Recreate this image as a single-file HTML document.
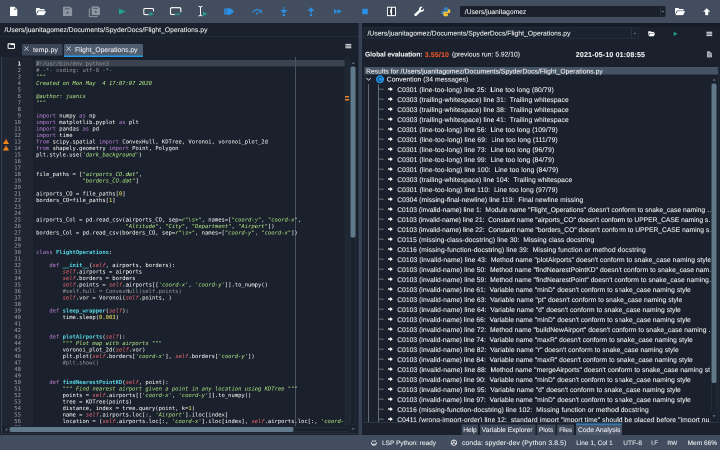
<!DOCTYPE html>
<html lang="en"><head><meta charset="utf-8"><title>Spyder - Flight_Operations.py</title>
<style>

html,body{margin:0;padding:0;}
body{text-rendering:geometricPrecision;width:720px;height:450px;overflow:hidden;background:#1a212c;position:relative;font-family:"Liberation Sans", "DejaVu Sans", sans-serif;color:#e8eaec;}
div,span,svg,pre{position:absolute;box-sizing:border-box;}

.t{-webkit-text-stroke:0.12px;white-space:pre;line-height:10px;height:10px;}
pre{margin:0;font-family:"DejaVu Sans Mono", "Liberation Mono", monospace;font-size:5.5px;line-height:6.5px;color:#fff;white-space:pre;}
pre span,pre i,pre b{position:static;}
.s{color:#b0e686;} .c{color:#999;} .n{color:#faed5c;} .k{color:#bd7fd6;} .i{color:#ee6772;} .d{color:#57d6e4;}
#half{left:0;top:0;width:1440px;height:900px;transform:scale(.5);transform-origin:0 0;}
#dbl{left:0;top:0;width:720px;height:450px;zoom:2;}
#toolbar,#left,#editor,#right,#status,#tree{will-change:transform;}
#ln{color:#9da2a9;text-align:right;}
.row{left:0;width:100%;height:10px;}
.ic{overflow:visible;}

</style></head><body><div id="half"><div id="dbl">
<div id="toolbar" style="left:0;top:0;width:720px;height:23px;background:#424e60">
<div style="left:460px;top:5.8px;width:205.5px;height:11.4px;background:#1a212c;border-radius:1.5px"></div>
<div style="left:660px;top:6.5px;width:0.5px;height:10px;background:#37414f"></div>
<svg class="ic" style="left:0;top:0" width="720" height="23" viewBox="0 0 720 23"><path d="M10.6,6.8 H14.6 L17.3,9.5 V15.4 q0,.6 -.6,.6 H10.6 q-.6,0 -.6,-.6 V7.4 q0,-.6 .6,-.6z" fill="#ffffff"/><path d="M14.3,7.6 V9.9 H16.6z" fill="#5a6677"/><path d="M36.00,14.51 L36.00,8.59 Q36.00,8.00 36.60,8.00 L39.30,8.00 L40.30,8.99 L44.00,8.99 Q44.60,8.99 44.60,9.58 L44.60,10.47 L38.60,10.47 Q37.90,10.47 37.60,11.06 Z" fill="#ffffff"/><path d="M36.50,15.10 L38.30,11.55 Q38.50,11.16 39.00,11.16 L45.70,11.16 Q46.20,11.16 45.90,11.65 L44.30,14.71 Q44.10,15.10 43.60,15.10 Z" fill="#ffffff"/><path d="M63.8,6.8 H70.098 L72.1,8.802 V15.2 q0,.8 -.8,.8 H63.8 q-.8,0 -.8,-.8 V7.6 q0,-.8 .8,-.8z" fill="#8d95a1"/><rect x="64.82" y="8.36" width="4.73" height="0.92" fill="#424e60"/><circle cx="67.55" cy="12.60" r="1.00" fill="#424e60"/><path d="M90.6,9 H89.9 q-.6,0 -.6,.6 V16 q0,.6 .6,.6 H96.6 q.6,0 .6,-.6 V15.6" fill="none" stroke="#8d95a1" stroke-width="1"/><path d="M92.39999999999999,6.4 H98.152 L100.0,8.248000000000001 V14.2 q0,.8 -.8,.8 H92.39999999999999 q-.8,0 -.8,-.8 V7.2 q0,-.8 .8,-.8z" fill="#8d95a1"/><rect x="93.28" y="7.86" width="4.37" height="0.86" fill="#424e60"/><circle cx="95.80" cy="11.82" r="0.92" fill="#424e60"/><path d="M119,8.7 L125.7,11.5 L119,14.4z" fill="#21a28f"/><path d="M148.6,14.6 H145 q-1.2,0 -1.2,-1.2 V9.7 q0,-1.2 1.2,-1.2 H152.3 q1.2,0 1.2,1.2 V11.4" fill="none" stroke="#ffffff" stroke-width="1"/><path d="M149.6,12 L153.9,14 L149.6,16z" fill="#21a28f"/> <path d="M174.6,14.5 H171.8 q-1.3,0 -1.3,-1.3 V9 q0,-1.3 1.3,-1.3 H179.5 q1.3,0 1.3,1.3 V12.2" fill="none" stroke="#ffffff" stroke-width="1.1"/><path d="M175.4,13 L177.9,14.2 L175.4,15.4z M177.9,13 L180.4,14.2 L177.9,15.4z" fill="#21a28f"/><path d="M198.6,6.4 q1.4,0 1.9,.8 q.5,-.8 1.9,-.8 M198.6,15.9 q1.4,0 1.9,-.8 q.5,.8 1.9,.8 M200.5,7 V15.3" fill="none" stroke="#ffffff" stroke-width="0.95"/><path d="M203,11.8 L207.4,13.9 L203,16z" fill="#21a28f"/><path d="M224.3,8.3 H225.8 V14.8 H224.3z M226.4,8.2 H229.4 Q230.3,8.2 231,8.9 L233.6,10.9 Q234.3,11.5 233.6,12.1 L231,14.1 Q230.3,14.8 229.4,14.8 H226.4z" fill="#2b90e3"/><path d="M252.8,12.4 Q256.5,7.4 260.4,11" fill="none" stroke="#2b90e3" stroke-width="1.2"/><path d="M258.6,12.6 L261.8,9.2 L261.9,12.7z" fill="#2b90e3"/><circle cx="256.8" cy="13.4" r="1.05" fill="#2b90e3"/><path d="M283.35,6.9 H284.35 V10 H287.6 L283.85,13.5 L280.1,10 H283.35z" fill="#2b90e3"/><rect x="282.6" y="14.1" width="2.5" height="1.9" fill="#2b90e3"/><path d="M311,7.2 L314.4,10.9 H311.75 V13.2 H310.25 V10.9 H307.6z" fill="#2b90e3"/><rect x="309.9" y="14.1" width="2.2" height="1.9" fill="#2b90e3"/><path d="M334,9 L337.9,11.4 L334,13.8z M337.8,9 L341.7,11.4 L337.8,13.8z" fill="#2b90e3"/><rect x="362.2" y="8.8" width="5.6" height="5.5" rx="0.7" fill="#2b90e3"/><rect x="387" y="6.8" width="9" height="9.3" rx="0.5" fill="#ffffff"/><path d="M387.9,7.8 H390.9 V8.8 Q389.3,11.4 390.9,14.1 V15.1 H387.9z" fill="#2d3644"/><rect x="392.1" y="7.8" width="2.9" height="7.3" fill="#2d3644"/><path d="M414.9,15.8 Q413.8,15.3 414.3,14.4 L419,9.9 Q418.6,7.9 420.2,7 Q421.4,6.4 422.6,6.9 L420.8,8.7 L421.1,9.9 L422.3,10.2 L424,8.4 Q424.5,9.8 423.6,10.9 Q422.5,12 420.9,11.6 L416.2,16 Q415.6,16.4 414.9,15.8z" fill="#ffffff"/><path d="M445.6,7.3 q-2,0 -2,1.5 v1.3 h2.3 v.5 h-3.3 q-1.3,0 -1.3,1.9 q0,1.9 1.3,1.9 h.9 v-1.3 q0,-1.2 1.4,-1.2 h2.2 q1.1,0 1.1,-1.1 v-2 q0,-1.5 -2.6,-1.5z" fill="#3b7fb8"/><path d="M446,16.4 q2,0 2,-1.5 v-1.3 h-2.3 v-.5 h3.3 q1.3,0 1.3,-1.9 q0,-1.9 -1.3,-1.9 h-.9 v1.3 q0,1.2 -1.4,1.2 h-2.2 q-1.1,0 -1.1,1.1 v2 q0,1.5 2.6,1.5z" fill="#f6c73e"/><path d="M661.8,11 L662.8,12 L663.8,11" fill="none" stroke="#9aa1ab" stroke-width="0.55"/><path d="M675.00,14.51 L675.00,8.59 Q675.00,8.00 675.60,8.00 L678.30,8.00 L679.30,8.99 L683.00,8.99 Q683.60,8.99 683.60,9.58 L683.60,10.47 L677.60,10.47 Q676.90,10.47 676.60,11.06 Z" fill="#ffffff"/><path d="M675.50,15.10 L677.30,11.55 Q677.50,11.16 678.00,11.16 L684.70,11.16 Q685.20,11.16 684.90,11.65 L683.30,14.71 Q683.10,15.10 682.60,15.10 Z" fill="#ffffff"/><path d="M706.7,8.2 L710.3,11.8 H708.2 V15.1 H705.2 V11.8 H703.1z" fill="#ffffff"/></svg>
<span class="t " style="left:464.8px;top:6.85px;font-size:6.7px;color:#e8eaec;letter-spacing:0.025px;">/Users/juanitagomez</span>
</div>
<div id="left" style="left:0;top:23px;width:358.5px;height:412px;background:#1a212c">
<span class="t " style="left:4.5px;top:2.05px;font-size:6.7px;color:#e8eaec;letter-spacing:0.070px;">/Users/juanitagomez/Documents/SpyderDocs/Flight_Operations.py</span>
<div style="left:0;top:13.4px;width:358.5px;height:0.8px;background:#2a3442"></div>
<div style="left:22px;top:21px;width:40.7px;height:11.4px;background:#3b4657;border-radius:1.5px 1.5px 0 0"></div>
<div style="left:64px;top:21px;width:79px;height:13px;background:#4f5d70;border-radius:1.5px 1.5px 0 0;border-bottom:1.7px solid #259ae9"></div>
<span class="t " style="left:33px;top:21.75px;font-size:6.717px;color:#e8eaec;letter-spacing:0.160px;">temp.py</span>
<span class="t " style="left:75px;top:21.75px;font-size:6.7px;color:#e8eaec;letter-spacing:0.036px;">Flight_Operations.py</span>
<svg class="ic" style="left:0;top:-23px" width="360" height="60" viewBox="0 0 360 60"><rect x="7.6" y="43.2" width="7.4" height="5.7" rx="0.9" fill="#ffffff"/><path d="M8.6,44.4 H10.4 L11,45.1 H14 V47.9 H8.6z" fill="#1a212c"/><path d="M24.45,46.550000000000004 L28.55,50.65 M28.55,46.550000000000004 L24.45,50.65" stroke="#d6d9de" stroke-width="0.65" fill="none"/><path d="M66.55,46.550000000000004 L70.64999999999999,50.65 M70.64999999999999,46.550000000000004 L66.55,50.65" stroke="#d6d9de" stroke-width="0.65" fill="none"/><rect x="345.4" y="43.90" width="5.9" height="1.23" fill="#c4c8ce"/><rect x="345.4" y="45.48" width="5.9" height="1.23" fill="#c4c8ce"/><rect x="345.4" y="47.07" width="5.9" height="1.23" fill="#c4c8ce"/></svg>
</div>
<div id="editor" style="left:1.2px;top:56.6px;width:356.3px;height:377.4px;background:#1a212c;border:0.5px solid #364152;border-left-width:1px;border-right-width:0;overflow:hidden">
<div style="left:0;top:0;width:31.2px;height:376px;background:#1f2632"></div>
<div style="left:33.5px;top:3.10px;width:309.4px;height:6.3px;background:#3a434f"></div>
<div style="left:293.2px;top:0;width:0.6px;height:370px;background:#4a5361"></div>
<pre id="ln" style="left:0;top:3.40px;width:18.9px"><b style="color:#fff">1</b>
2
3
4
5
6
7
8
9
10
11
12
13
14
15
16
17
18
19
20
21
22
23
24
25
26
27
28
29
30
31
32
33
34
35
36
37
38
39
40
41
42
43
44
45
46
47
48
49
50
51
52
53
54
55
56
57</pre>
<pre id="code" style="left:34.10px;top:3.40px;width:308.4px;height:364.7px;overflow:hidden"><span class="c">#!/usr/bin/env python3</span>
<span class="c"># -*- coding: utf-8 -*-</span>
<i class="s">"""</i>
<i class="s">Created on Mon May  4 17:07:07 2020</i>
<i class="s"></i>
<i class="s">@author: juanis</i>
<i class="s">"""</i>

<span class="k">import</span> numpy <span class="k">as</span> np
<span class="k">import</span> matplotlib.pyplot <span class="k">as</span> plt
<span class="k">import</span> pandas <span class="k">as</span> pd
<span class="k">import</span> time
<span class="k">from</span> scipy.spatial <span class="k">import</span> ConvexHull, KDTree, Voronoi, voronoi_plot_2d
<span class="k">from</span> shapely.geometry <span class="k">import</span> Point, Polygon
plt.style.use(<i class="s">'dark_background'</i>)


file_paths = [<i class="s">"airports_CO.dat"</i>,
              <i class="s">"borders_CO.dat"</i>]

airports_CO = file_paths[<span class="n">0</span>]
borders_CO=file_paths[<span class="n">1</span>]


airports_Col = pd.read_csv(airports_CO, sep=<i class="s">r"\s+"</i>, names=[<i class="s">"coord-y"</i>, <i class="s">"coord-x"</i>,
                           <i class="s">"Altitude"</i>, <i class="s">"City"</i>, <i class="s">"Department"</i>, <i class="s">"Airport"</i>])
borders_Col = pd.read_csv(borders_CO, sep=<i class="s">r"\s+"</i>, names=[<i class="s">"coord-y"</i>, <i class="s">"coord-x"</i>])


<span class="k">class</span> <b class="d">FlightOperations</b>:

    <span class="k">def</span> <b class="d">__init__</b>(<i class="i">self</i>, airports, borders):
        <i class="i">self</i>.airports = airports
        <i class="i">self</i>.borders = borders
        <i class="i">self</i>.points = <i class="i">self</i>.airports[[<i class="s">'coord-x'</i>, <i class="s">'coord-y'</i>]].to_numpy()
        <span class="c">#self.hull = ConvexHull(self.points)</span>
        <i class="i">self</i>.vor = Voronoi(<i class="i">self</i>.points, )

    <span class="k">def</span> <b class="d">sleep_wrapper</b>(<i class="i">self</i>):
        time.sleep(<span class="n">0.003</span>)


    <span class="k">def</span> <b class="d">plotAirports</b>(<i class="i">self</i>):
        <i class="s">""" Plot map with airports """</i>
        voronoi_plot_2d(<i class="i">self</i>.vor)
        plt.plot(<i class="i">self</i>.borders[<i class="s">'coord-x'</i>], <i class="i">self</i>.borders[<i class="s">'coord-y'</i>])
        <span class="c">#plt.show()</span>


    <span class="k">def</span> <b class="d">findNearestPointKD</b>(<i class="i">self</i>, point):
        <i class="s">""" Find nearest airport given a point in any location using KDTree """</i>
        points = <i class="i">self</i>.airports[[<i class="s">'coord-x'</i>, <i class="s">'coord-y'</i>]].to_numpy()
        tree = KDTree(points)
        distance, index = tree.query(point, k=<span class="n">1</span>)
        name = <i class="i">self</i>.airports.loc[:, <i class="s">'Airport'</i>].iloc[index]
        location = (<i class="i">self</i>.airports.loc[:, <i class="s">'coord-x'</i>].iloc[index], <i class="i">self</i>.airports.loc[:, <i class="s">'coord-y'</i>].iloc[index])
        <span class="k">return</span> name, location</pre>
<div style="left:342.3px;top:0;width:6px;height:376px;background:#1f2733"></div>
<div style="left:342.8px;top:39.2px;width:4px;height:1.2px;background:#e8852b"></div>
<div style="left:342.8px;top:42.2px;width:4px;height:1.2px;background:#e8852b"></div>
<div style="left:348.2px;top:0;width:5.8px;height:376px;background:#1a212c"></div>
<div style="left:348.4px;top:9.6px;width:5.2px;height:358.3px;border:0.5px solid #2d3846;border-radius:2px"></div>
<div style="left:348.4px;top:9.6px;width:5.2px;height:170.8px;background:#60798b;border-radius:2px"></div>
<div style="left:0;top:368.9px;width:348.2px;height:8px;background:#1a212c"></div>
<div style="left:7.3px;top:369.9px;width:339.2px;height:5.2px;border:0.5px solid #2d3846;border-radius:2px"></div>
<div style="left:7.3px;top:369.9px;width:284.0px;height:5.2px;background:#60798b;border-radius:2px"></div>
<svg class="ic" style="left:-2.2px;top:-57.1px" width="360" height="440" viewBox="0 0 360 440"><path d="M6,138.6 L9,144.0 H3z" fill="#f08a1f"/><path d="M6,138.6 L7,140.4 H5z" fill="#c4562f"/><rect x="5.65" y="140.20000000000002" width="0.7" height="2" fill="#8a3a1a"/><path d="M6,145.1 L9,150.5 H3z" fill="#f08a1f"/><path d="M6,145.1 L7,146.9 H5z" fill="#c4562f"/><rect x="5.65" y="146.70000000000002" width="0.7" height="2" fill="#8a3a1a"/><path d="M351.6,64 L353.3,62 L355,64z" fill="#5a6778"/><path d="M351.4,428.2 L353.1,430.2 L354.8,428.2z" fill="#5a6778"/><path d="M7.2,427.8 L5.2,429.6 L7.2,431.4z" fill="#5a6778"/></svg>
</div>
<div style="left:358.5px;top:23px;width:3.5px;height:412px;background:#374255"></div>
<div id="right" style="left:362px;top:23px;width:358px;height:412px;background:#1a212c">
<div style="left:0;top:0;width:358px;height:3.8px;background:#161c27"></div>
<div style="left:1.5px;top:4.3px;width:275.5px;height:11.8px;background:#1b2330;border:0.5px solid #2b3545;border-radius:1.5px"></div>
<div style="left:269.29999999999995px;top:5.5px;width:0.5px;height:9.5px;background:#37414f"></div>
<span class="t " style="left:5.5px;top:5.55px;font-size:6.7px;color:#e8eaec;letter-spacing:0.070px;">/Users/juanitagomez/Documents/SpyderDocs/Flight_Operations.py</span>
<span class="t " style="left:3px;top:26.65px;font-size:6.7px;color:#e8eaec;font-weight:bold;letter-spacing:-0.030px;">Global evaluation:</span>
<span class="t " style="left:62.69999999999999px;top:26.65px;font-size:6.981px;color:#e6532c;font-weight:bold;letter-spacing:0.160px;">3.55/10</span>
<span class="t " style="left:90px;top:26.65px;font-size:6.7px;color:#e8eaec;letter-spacing:0.028px;">(previous run: 5.92/10)</span>
<span class="t " style="left:213.79999999999995px;top:26.65px;font-size:7.056px;color:#e8eaec;font-weight:bold;letter-spacing:0.160px;">2021-05-10 01:08:55</span>
<div id="tree" style="left:2px;top:41.599999999999994px;width:355px;height:358.0px;border:0.7px solid #2c3644;overflow:hidden">
<div style="left:0;top:1.8px;width:353.6px;height:7.7px;background:#455364"></div>
<span class="t " style="left:1.6000000000000227px;top:1.25px;font-size:6.7px;color:#e8eaec;letter-spacing:0.056px;">Results for /Users/juanitagomez/Documents/SpyderDocs/Flight_Operations.py</span>
<span class="t " style="left:22.30000000000001px;top:9.65px;font-size:6.7px;color:#e8eaec;letter-spacing:0.062px;">Convention (34 messages)</span>
<span class="t r" style="left:32.69999999999999px;top:19.85px;font-size:6.7px;color:#e8eaec;letter-spacing:0.096px;">C0301 (line-too-long) line 25:  Line too long (80/79)</span>
<span class="t r" style="left:32.69999999999999px;top:29.85px;font-size:6.7px;color:#e8eaec;letter-spacing:0.105px;">C0303 (trailing-whitespace) line 31:  Trailing whitespace</span>
<span class="t r" style="left:32.69999999999999px;top:39.85px;font-size:6.7px;color:#e8eaec;letter-spacing:0.105px;">C0303 (trailing-whitespace) line 38:  Trailing whitespace</span>
<span class="t r" style="left:32.69999999999999px;top:49.85px;font-size:6.7px;color:#e8eaec;letter-spacing:0.105px;">C0303 (trailing-whitespace) line 41:  Trailing whitespace</span>
<span class="t r" style="left:32.69999999999999px;top:59.85px;font-size:6.7px;color:#e8eaec;letter-spacing:0.100px;">C0301 (line-too-long) line 56:  Line too long (109/79)</span>
<span class="t r" style="left:32.69999999999999px;top:69.85px;font-size:6.7px;color:#e8eaec;letter-spacing:0.118px;">C0301 (line-too-long) line 69:  Line too long (111/79)</span>
<span class="t r" style="left:32.69999999999999px;top:79.85px;font-size:6.7px;color:#e8eaec;letter-spacing:0.106px;">C0301 (line-too-long) line 73:  Line too long (96/79)</span>
<span class="t r" style="left:32.69999999999999px;top:89.85px;font-size:6.7px;color:#e8eaec;letter-spacing:0.106px;">C0301 (line-too-long) line 99:  Line too long (84/79)</span>
<span class="t r" style="left:32.69999999999999px;top:99.85px;font-size:6.7px;color:#e8eaec;letter-spacing:0.109px;">C0301 (line-too-long) line 100:  Line too long (84/79)</span>
<span class="t r" style="left:32.69999999999999px;top:109.85px;font-size:6.7px;color:#e8eaec;letter-spacing:0.099px;">C0303 (trailing-whitespace) line 104:  Trailing whitespace</span>
<span class="t r" style="left:32.69999999999999px;top:119.85px;font-size:6.7px;color:#e8eaec;letter-spacing:0.109px;">C0301 (line-too-long) line 110:  Line too long (97/79)</span>
<span class="t r" style="left:32.69999999999999px;top:129.85px;font-size:6.7px;color:#e8eaec;letter-spacing:0.063px;">C0304 (missing-final-newline) line 119:  Final newline missing</span>
<span class="t r" style="left:32.69999999999999px;top:139.85px;font-size:6.7px;color:#e8eaec;letter-spacing:0.023px;max-width:313.1px;overflow:hidden;">C0103 (invalid-name) line 1:  Module name "Flight_Operations" doesn't conform to snake_case naming …</span>
<span class="t r" style="left:32.69999999999999px;top:149.85px;font-size:6.7px;color:#e8eaec;letter-spacing:-0.009px;max-width:313.1px;overflow:hidden;">C0103 (invalid-name) line 21:  Constant name "airports_CO" doesn't conform to UPPER_CASE naming s…</span>
<span class="t r" style="left:32.69999999999999px;top:159.85px;font-size:6.7px;color:#e8eaec;letter-spacing:-0.003px;max-width:313.1px;overflow:hidden;">C0103 (invalid-name) line 22:  Constant name "borders_CO" doesn't conform to UPPER_CASE naming s…</span>
<span class="t r" style="left:32.69999999999999px;top:169.85px;font-size:6.7px;color:#e8eaec;letter-spacing:0.092px;">C0115 (missing-class-docstring) line 30:  Missing class docstring</span>
<span class="t r" style="left:32.69999999999999px;top:179.85px;font-size:6.7px;color:#e8eaec;letter-spacing:0.112px;">C0116 (missing-function-docstring) line 39:  Missing function or method docstring</span>
<span class="t r" style="left:32.69999999999999px;top:189.85px;font-size:6.7px;color:#e8eaec;letter-spacing:0.076px;max-width:313.1px;overflow:hidden;">C0103 (invalid-name) line 43:  Method name "plotAirports" doesn't conform to snake_case naming style</span>
<span class="t r" style="left:32.69999999999999px;top:199.85px;font-size:6.7px;color:#e8eaec;letter-spacing:0.053px;max-width:313.1px;overflow:hidden;">C0103 (invalid-name) line 50:  Method name "findNearestPointKD" doesn't conform to snake_case nam…</span>
<span class="t r" style="left:32.69999999999999px;top:209.85px;font-size:6.7px;color:#e8eaec;letter-spacing:0.055px;max-width:313.1px;overflow:hidden;">C0103 (invalid-name) line 59:  Method name "findNearestPoint" doesn't conform to snake_case naming…</span>
<span class="t r" style="left:32.69999999999999px;top:219.85px;font-size:6.7px;color:#e8eaec;letter-spacing:0.040px;">C0103 (invalid-name) line 61:  Variable name "minD" doesn't conform to snake_case naming style</span>
<span class="t r" style="left:32.69999999999999px;top:229.85px;font-size:6.7px;color:#e8eaec;letter-spacing:0.057px;">C0103 (invalid-name) line 63:  Variable name "pt" doesn't conform to snake_case naming style</span>
<span class="t r" style="left:32.69999999999999px;top:239.85px;font-size:6.7px;color:#e8eaec;letter-spacing:0.062px;">C0103 (invalid-name) line 64:  Variable name "d" doesn't conform to snake_case naming style</span>
<span class="t r" style="left:32.69999999999999px;top:249.85px;font-size:6.7px;color:#e8eaec;letter-spacing:0.040px;">C0103 (invalid-name) line 66:  Variable name "minD" doesn't conform to snake_case naming style</span>
<span class="t r" style="left:32.69999999999999px;top:259.85px;font-size:6.7px;color:#e8eaec;letter-spacing:0.053px;max-width:313.1px;overflow:hidden;">C0103 (invalid-name) line 72:  Method name "buildNewAirport" doesn't conform to snake_case naming …</span>
<span class="t r" style="left:32.69999999999999px;top:269.85px;font-size:6.7px;color:#e8eaec;letter-spacing:0.041px;">C0103 (invalid-name) line 74:  Variable name "maxR" doesn't conform to snake_case naming style</span>
<span class="t r" style="left:32.69999999999999px;top:279.85px;font-size:6.7px;color:#e8eaec;letter-spacing:0.056px;">C0103 (invalid-name) line 82:  Variable name "r" doesn't conform to snake_case naming style</span>
<span class="t r" style="left:32.69999999999999px;top:289.85px;font-size:6.7px;color:#e8eaec;letter-spacing:0.041px;">C0103 (invalid-name) line 84:  Variable name "maxR" doesn't conform to snake_case naming style</span>
<span class="t r" style="left:32.69999999999999px;top:299.85px;font-size:6.7px;color:#e8eaec;letter-spacing:0.070px;max-width:313.1px;overflow:hidden;">C0103 (invalid-name) line 88:  Method name "mergeAirports" doesn't conform to snake_case naming st…</span>
<span class="t r" style="left:32.69999999999999px;top:309.85px;font-size:6.7px;color:#e8eaec;letter-spacing:0.040px;">C0103 (invalid-name) line 90:  Variable name "minD" doesn't conform to snake_case naming style</span>
<span class="t r" style="left:32.69999999999999px;top:319.85px;font-size:6.7px;color:#e8eaec;letter-spacing:0.062px;">C0103 (invalid-name) line 95:  Variable name "d" doesn't conform to snake_case naming style</span>
<span class="t r" style="left:32.69999999999999px;top:329.85px;font-size:6.7px;color:#e8eaec;letter-spacing:0.040px;">C0103 (invalid-name) line 97:  Variable name "minD" doesn't conform to snake_case naming style</span>
<span class="t r" style="left:32.69999999999999px;top:339.85px;font-size:6.7px;color:#e8eaec;letter-spacing:0.102px;">C0116 (missing-function-docstring) line 102:  Missing function or method docstring</span>
<span class="t r" style="left:32.69999999999999px;top:349.85px;font-size:6.7px;color:#e8eaec;letter-spacing:0.108px;max-width:313.1px;overflow:hidden;">C0411 (wrong-import-order) line 12:  standard import "import time" should be placed before "import nu…</span>
<svg class="ic" style="left:-364.7px;top:-65.3px" width="720" height="450" viewBox="0 0 720 450"><path d="M366.3,78.5 L368.6,80.8 L370.9,78.5" fill="none" stroke="#d4d7db" stroke-width="0.8"/><circle cx="380" cy="79.8" r="4" fill="#2094ea"/><path d="M381.6,78.6 A2,2 0 1 0 381.6,81.1" fill="none" stroke="#17506e" stroke-width="1.1"/><path d="M368.4,84.7 V425 M378.6,84.7 V425" stroke="#9aa0a8" stroke-width="0.6" fill="none"/><path d="M378.6,89.6 H383.8" stroke="#9aa0a8" stroke-width="0.6" fill="none"/><path d="M388,88.9 H390.2 V87.5 L392.8,89.6 L390.2,91.7 V90.3 H388z" fill="#ffffff"/><path d="M378.6,99.6 H383.8" stroke="#9aa0a8" stroke-width="0.6" fill="none"/><path d="M388,98.9 H390.2 V97.5 L392.8,99.6 L390.2,101.7 V100.3 H388z" fill="#ffffff"/><path d="M378.6,109.6 H383.8" stroke="#9aa0a8" stroke-width="0.6" fill="none"/><path d="M388,108.9 H390.2 V107.5 L392.8,109.6 L390.2,111.7 V110.3 H388z" fill="#ffffff"/><path d="M378.6,119.6 H383.8" stroke="#9aa0a8" stroke-width="0.6" fill="none"/><path d="M388,118.9 H390.2 V117.5 L392.8,119.6 L390.2,121.7 V120.3 H388z" fill="#ffffff"/><path d="M378.6,129.6 H383.8" stroke="#9aa0a8" stroke-width="0.6" fill="none"/><path d="M388,128.9 H390.2 V127.5 L392.8,129.6 L390.2,131.7 V130.3 H388z" fill="#ffffff"/><path d="M378.6,139.6 H383.8" stroke="#9aa0a8" stroke-width="0.6" fill="none"/><path d="M388,138.9 H390.2 V137.5 L392.8,139.6 L390.2,141.7 V140.3 H388z" fill="#ffffff"/><path d="M378.6,149.6 H383.8" stroke="#9aa0a8" stroke-width="0.6" fill="none"/><path d="M388,148.9 H390.2 V147.5 L392.8,149.6 L390.2,151.7 V150.3 H388z" fill="#ffffff"/><path d="M378.6,159.6 H383.8" stroke="#9aa0a8" stroke-width="0.6" fill="none"/><path d="M388,158.9 H390.2 V157.5 L392.8,159.6 L390.2,161.7 V160.3 H388z" fill="#ffffff"/><path d="M378.6,169.6 H383.8" stroke="#9aa0a8" stroke-width="0.6" fill="none"/><path d="M388,168.9 H390.2 V167.5 L392.8,169.6 L390.2,171.7 V170.3 H388z" fill="#ffffff"/><path d="M378.6,179.6 H383.8" stroke="#9aa0a8" stroke-width="0.6" fill="none"/><path d="M388,178.9 H390.2 V177.5 L392.8,179.6 L390.2,181.7 V180.3 H388z" fill="#ffffff"/><path d="M378.6,189.6 H383.8" stroke="#9aa0a8" stroke-width="0.6" fill="none"/><path d="M388,188.9 H390.2 V187.5 L392.8,189.6 L390.2,191.7 V190.3 H388z" fill="#ffffff"/><path d="M378.6,199.6 H383.8" stroke="#9aa0a8" stroke-width="0.6" fill="none"/><path d="M388,198.9 H390.2 V197.5 L392.8,199.6 L390.2,201.7 V200.3 H388z" fill="#ffffff"/><path d="M378.6,209.6 H383.8" stroke="#9aa0a8" stroke-width="0.6" fill="none"/><path d="M388,208.9 H390.2 V207.5 L392.8,209.6 L390.2,211.7 V210.3 H388z" fill="#ffffff"/><path d="M378.6,219.6 H383.8" stroke="#9aa0a8" stroke-width="0.6" fill="none"/><path d="M388,218.9 H390.2 V217.5 L392.8,219.6 L390.2,221.7 V220.3 H388z" fill="#ffffff"/><path d="M378.6,229.6 H383.8" stroke="#9aa0a8" stroke-width="0.6" fill="none"/><path d="M388,228.9 H390.2 V227.5 L392.8,229.6 L390.2,231.7 V230.3 H388z" fill="#ffffff"/><path d="M378.6,239.6 H383.8" stroke="#9aa0a8" stroke-width="0.6" fill="none"/><path d="M388,238.9 H390.2 V237.5 L392.8,239.6 L390.2,241.7 V240.3 H388z" fill="#ffffff"/><path d="M378.6,249.6 H383.8" stroke="#9aa0a8" stroke-width="0.6" fill="none"/><path d="M388,248.9 H390.2 V247.5 L392.8,249.6 L390.2,251.7 V250.3 H388z" fill="#ffffff"/><path d="M378.6,259.6 H383.8" stroke="#9aa0a8" stroke-width="0.6" fill="none"/><path d="M388,258.9 H390.2 V257.5 L392.8,259.6 L390.2,261.7 V260.3 H388z" fill="#ffffff"/><path d="M378.6,269.6 H383.8" stroke="#9aa0a8" stroke-width="0.6" fill="none"/><path d="M388,268.9 H390.2 V267.5 L392.8,269.6 L390.2,271.7 V270.3 H388z" fill="#ffffff"/><path d="M378.6,279.6 H383.8" stroke="#9aa0a8" stroke-width="0.6" fill="none"/><path d="M388,278.9 H390.2 V277.5 L392.8,279.6 L390.2,281.7 V280.3 H388z" fill="#ffffff"/><path d="M378.6,289.6 H383.8" stroke="#9aa0a8" stroke-width="0.6" fill="none"/><path d="M388,288.9 H390.2 V287.5 L392.8,289.6 L390.2,291.7 V290.3 H388z" fill="#ffffff"/><path d="M378.6,299.6 H383.8" stroke="#9aa0a8" stroke-width="0.6" fill="none"/><path d="M388,298.9 H390.2 V297.5 L392.8,299.6 L390.2,301.7 V300.3 H388z" fill="#ffffff"/><path d="M378.6,309.6 H383.8" stroke="#9aa0a8" stroke-width="0.6" fill="none"/><path d="M388,308.9 H390.2 V307.5 L392.8,309.6 L390.2,311.7 V310.3 H388z" fill="#ffffff"/><path d="M378.6,319.6 H383.8" stroke="#9aa0a8" stroke-width="0.6" fill="none"/><path d="M388,318.9 H390.2 V317.5 L392.8,319.6 L390.2,321.7 V320.3 H388z" fill="#ffffff"/><path d="M378.6,329.6 H383.8" stroke="#9aa0a8" stroke-width="0.6" fill="none"/><path d="M388,328.9 H390.2 V327.5 L392.8,329.6 L390.2,331.7 V330.3 H388z" fill="#ffffff"/><path d="M378.6,339.6 H383.8" stroke="#9aa0a8" stroke-width="0.6" fill="none"/><path d="M388,338.9 H390.2 V337.5 L392.8,339.6 L390.2,341.7 V340.3 H388z" fill="#ffffff"/><path d="M378.6,349.6 H383.8" stroke="#9aa0a8" stroke-width="0.6" fill="none"/><path d="M388,348.9 H390.2 V347.5 L392.8,349.6 L390.2,351.7 V350.3 H388z" fill="#ffffff"/><path d="M378.6,359.6 H383.8" stroke="#9aa0a8" stroke-width="0.6" fill="none"/><path d="M388,358.9 H390.2 V357.5 L392.8,359.6 L390.2,361.7 V360.3 H388z" fill="#ffffff"/><path d="M378.6,369.6 H383.8" stroke="#9aa0a8" stroke-width="0.6" fill="none"/><path d="M388,368.9 H390.2 V367.5 L392.8,369.6 L390.2,371.7 V370.3 H388z" fill="#ffffff"/><path d="M378.6,379.6 H383.8" stroke="#9aa0a8" stroke-width="0.6" fill="none"/><path d="M388,378.9 H390.2 V377.5 L392.8,379.6 L390.2,381.7 V380.3 H388z" fill="#ffffff"/><path d="M378.6,389.6 H383.8" stroke="#9aa0a8" stroke-width="0.6" fill="none"/><path d="M388,388.9 H390.2 V387.5 L392.8,389.6 L390.2,391.7 V390.3 H388z" fill="#ffffff"/><path d="M378.6,399.6 H383.8" stroke="#9aa0a8" stroke-width="0.6" fill="none"/><path d="M388,398.9 H390.2 V397.5 L392.8,399.6 L390.2,401.7 V400.3 H388z" fill="#ffffff"/><path d="M378.6,409.6 H383.8" stroke="#9aa0a8" stroke-width="0.6" fill="none"/><path d="M388,408.9 H390.2 V407.5 L392.8,409.6 L390.2,411.7 V410.3 H388z" fill="#ffffff"/><path d="M378.6,419.6 H383.8" stroke="#9aa0a8" stroke-width="0.6" fill="none"/><path d="M388,418.9 H390.2 V417.5 L392.8,419.6 L390.2,421.7 V420.3 H388z" fill="#ffffff"/></svg>
<div style="left:345.8px;top:9.7px;width:10px;height:350px;background:#1a212c"></div>
<div style="left:346.9px;top:18.7px;width:5.2px;height:329.5px;border:0.5px solid #2d3846;border-radius:2px"></div>
<div style="left:346.9px;top:18.7px;width:5.2px;height:299.3px;background:#60798b;border-radius:2px"></div>
<svg class="ic" style="left:-364.7px;top:-65.3px" width="720" height="450" viewBox="0 0 720 450"><path d="M712.4,81.2 L714.1,79.1 L715.8,81.2z" fill="#5a6778"/><path d="M712.4,415.6 L714.1,417.7 L715.8,415.6z" fill="#5a6778"/></svg>
</div>
<svg class="ic" style="left:-362px;top:-23px" width="720" height="450" viewBox="0 0 720 450"><path d="M633.9,32.8 L634.9,33.8 L635.9,32.8" fill="none" stroke="#8c939e" stroke-width="0.55"/><path d="M648.30,35.78 L648.30,31.62 Q648.30,31.20 648.71,31.20 L650.54,31.20 L651.22,31.89 L653.74,31.89 Q654.15,31.89 654.15,32.31 L654.15,32.94 L650.07,32.94 Q649.59,32.94 649.39,33.35 Z" fill="#ffffff"/><path d="M648.64,36.20 L649.86,33.70 Q650.00,33.42 650.34,33.42 L654.90,33.42 Q655.24,33.42 655.03,33.77 L653.94,35.92 Q653.81,36.20 653.47,36.20 Z" fill="#ffffff"/><path d="M673.7,31.7 L677.4,33.9 L673.7,36.1z" fill="#21a28f"/><rect x="706.4" y="31.70" width="5.8" height="1.23" fill="#c4c8ce"/><rect x="706.4" y="33.28" width="5.8" height="1.23" fill="#c4c8ce"/><rect x="706.4" y="34.87" width="5.8" height="1.23" fill="#c4c8ce"/><path d="M707,51.4 H709.8 L711.9,53.5 V57.4 H707z" fill="#b4b9c1"/><path d="M708,53.6 H710.6 M708,54.8 H710.9 M708,56 H710.9" stroke="#59606c" stroke-width="0.5"/></svg>
<div style="left:99.3px;top:401.3px;width:16.7px;height:10.6px;background:#3b4657;border-radius:0 0 1.5px 1.5px;"></div>
<div style="left:118.0px;top:401.3px;width:55.3px;height:10.6px;background:#3b4657;border-radius:0 0 1.5px 1.5px;"></div>
<div style="left:175.0px;top:401.3px;width:18.3px;height:10.6px;background:#3b4657;border-radius:0 0 1.5px 1.5px;"></div>
<div style="left:195.0px;top:401.3px;width:17.0px;height:10.6px;background:#3b4657;border-radius:0 0 1.5px 1.5px;"></div>
<div style="left:213.7px;top:401.3px;width:46.3px;height:10.6px;background:#4a576a;border-radius:0 0 1.5px 1.5px;border-top:1.4px solid #259ae9;top:400.4px;height:11.5px;"></div>
<span class="t " style="left:101.30000000000001px;top:401.95px;font-size:6.664px;color:#e8eaec;letter-spacing:-0.100px;">Help</span>
<span class="t " style="left:119.80000000000001px;top:401.95px;font-size:6.7px;color:#e8eaec;letter-spacing:-0.003px;">Variable Explorer</span>
<span class="t " style="left:176.89999999999998px;top:401.95px;font-size:6.614px;color:#e8eaec;letter-spacing:-0.100px;">Plots</span>
<span class="t " style="left:197.10000000000002px;top:401.95px;font-size:6.349px;color:#e8eaec;letter-spacing:-0.100px;">Files</span>
<span class="t " style="left:216px;top:401.95px;font-size:6.7px;color:#e8eaec;letter-spacing:-0.010px;">Code Analysis</span>
</div>
<div id="status" style="left:0;top:435px;width:720px;height:15px;background:#424e60">
<svg class="ic" style="left:0;top:-435px" width="720" height="450" viewBox="0 0 720 450"><circle cx="372.8" cy="441.1" r="0.7" fill="#ffffff"/><circle cx="375.1" cy="441.1" r="0.7" fill="#ffffff"/><path d="M371.5,442.4 Q371.6,445.2 373.95,445.2 Q376.3,445.2 376.4,442.4" fill="none" stroke="#ffffff" stroke-width="0.85"/><path d="M373.95,443.4 V445.2" stroke="#ffffff" stroke-width="0.8"/><circle cx="453.9" cy="442.7" r="2.7" fill="none" stroke="#ffffff" stroke-width="0.75"/><circle cx="453.9" cy="442.7" r="0.7" fill="#ffffff"/><path d="M453.9,440 V442 M451.6,444.1 L453.3,443 M456.2,444.1 L454.5,443" stroke="#ffffff" stroke-width="0.7"/></svg>
<span class="t " style="left:382px;top:2.85px;font-size:6.5px;color:#e8eaec;letter-spacing:-0.005px;">LSP Python: ready</span>
<span class="t " style="left:462px;top:2.85px;font-size:6.721px;color:#e8eaec;letter-spacing:0.160px;">conda: spyder-dev (Python 3.8.5)</span>
<span class="t " style="left:576.2px;top:2.85px;font-size:6.5px;color:#e8eaec;letter-spacing:0.008px;">Line 1, Col 1</span>
<span class="t " style="left:623.3px;top:2.85px;font-size:6.5px;color:#e8eaec;letter-spacing:0.056px;">UTF-8</span>
<span class="t " style="left:651.3px;top:2.85px;font-size:5.741px;color:#e8eaec;letter-spacing:-0.100px;">LF</span>
<span class="t " style="left:667.4px;top:2.85px;font-size:5.943px;color:#e8eaec;letter-spacing:-0.100px;">RW</span>
<span class="t " style="left:687.6px;top:2.85px;font-size:6.5px;color:#e8eaec;letter-spacing:0.033px;">Mem 66%</span>
</div>
</div></div></body></html>
